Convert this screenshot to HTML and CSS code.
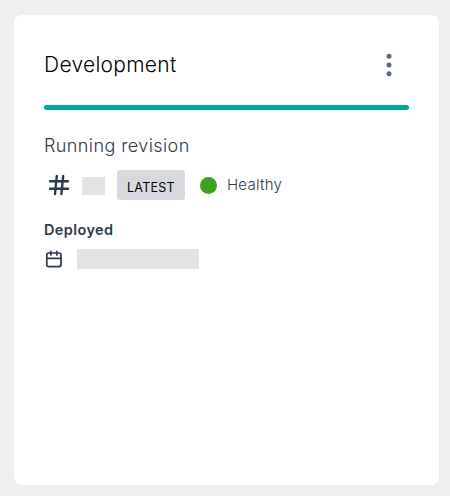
FILE: index.html
```html
<!DOCTYPE html>
<html lang="en">
<head>
<meta charset="utf-8">
<title>Development</title>
<link rel="stylesheet" href="styles.css">
</head>
<body>
<main class="card">
  <header class="card-header">
    <h1 class="title"><span>Development</span></h1>
    <button class="menu" aria-label="Options">
      <svg width="6" height="24" viewBox="0 0 6 24" fill="#596885"><circle cx="3" cy="3.3" r="2.5"/><circle cx="3" cy="12" r="2.5"/><circle cx="3" cy="20.7" r="2.5"/></svg>
    </button>
  </header>
  <div class="divider"></div>
  <h2 class="subtitle"><span>Running revision</span></h2>
  <div class="revision">
    <svg class="hash" width="22" height="22" viewBox="0 0 22 22" fill="none" stroke="#2d3a4b" stroke-width="2.4" stroke-linecap="round"><path d="M2 7.3H20M2 14.7H20M8.8 2L7 20M15.2 2L13.4 20"/></svg>
    <div class="redacted redacted-id"></div>
    <div class="tag"><span>LATEST</span></div>
    <div class="dot"></div>
    <div class="status"><span>Healthy</span></div>
  </div>
  <h3 class="label"><span>Deployed</span></h3>
  <div class="deployed">
    <svg width="18" height="18" viewBox="0 0 18 18" fill="none" stroke="#2d3a4b" stroke-width="1.7" stroke-linecap="round"><rect x="1.8" y="3" width="14.2" height="13.6" rx="2"/><path d="M2 8.4H16M5.8 1.4V5M11.8 1.4V5"/></svg>
    <div class="redacted redacted-date"></div>
  </div>
</main>
</body>
</html>
```
FILE: styles.css
```css
* { box-sizing: border-box; }
body {
  margin: 0;
  height: 496px;
  padding: 15px 11px 11px 14px;
  background: #eeeff1;
  color: #2d3a4b;
  font-family: Inter, Lato, sans-serif;
}
.card {
  height: 470px;
  padding: 30px;
  background: #fff;
  border-radius: 8px;
}
.card-header {
  display: flex;
  justify-content: space-between;
  align-items: center;
  height: 40px;
  padding-right: 17px;
}
h1, h2, h3 { margin: 0; white-space: nowrap; }
.title {
  color: #000;
  font-size: 21px;
  font-weight: 300;
  line-height: 30px;
  letter-spacing: 0.28px;
}
.menu {
  display: flex;
  padding: 0;
  border: 0;
  background: none;
}
.divider {
  height: 5px;
  margin-top: 20px;
  border-radius: 2.5px;
  background: #00a6a0;
}
.subtitle {
  margin-top: 24px;
  font-size: 18px;
  font-weight: 300;
  line-height: 24px;
  letter-spacing: 0.41px;
}
.revision {
  display: flex;
  align-items: center;
  height: 30px;
  margin-top: 12px;
  padding-left: 4px;
}
.redacted { background: #e3e3e3; }
.redacted-id {
  width: 23px;
  height: 18px;
  margin: 2px 12px 0 12px;
}
.tag {
  width: 68px;
  height: 30px;
  padding: 3px 0 0 10px;
  border-radius: 3px;
  background: #d8d9de;
  color: #000;
  font-size: 12.5px;
  line-height: 30px;
  letter-spacing: 0.25px;
}
.dot {
  width: 17px;
  height: 17px;
  margin: 1px 10px 0 15px;
  border-radius: 50%;
  background: #38a51e;
}
.status {
  font-size: 15px;
  font-weight: 300;
  line-height: 30px;
  letter-spacing: 0.25px;
}
.label {
  margin-top: 20px;
  font-size: 14.5px;
  font-weight: 600;
  line-height: 20px;
  letter-spacing: 0.4px;
}
.deployed {
  display: flex;
  align-items: center;
  gap: 14px;
  height: 20px;
  margin-top: 9px;
  padding-left: 1px;
}
.redacted-date {
  width: 122px;
  height: 20px;
}
```
